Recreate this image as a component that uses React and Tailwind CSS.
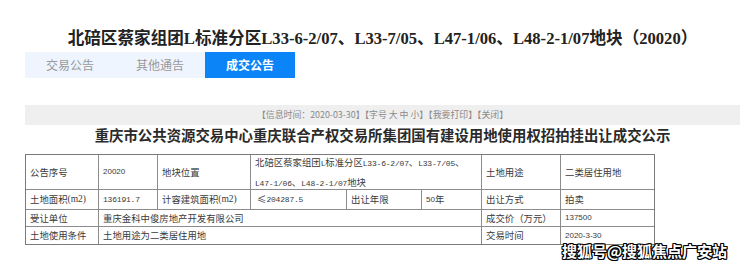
import React from "react";

function M({ children }) {
  return <span className="font-['Liberation_Mono',monospace] text-[8px] tracking-[-0.2px]">{children}</span>;
}
function S({ children }) {
  return <span className="font-['Liberation_Sans',sans-serif] text-[8px]">{children}</span>;
}

function Cell({ children, className = "" }) {
  return (
    <div className={"bg-white flex items-center pl-[4px] whitespace-nowrap overflow-hidden " + className}>
      {children}
    </div>
  );
}

export default function App() {
  return (
    <div className="w-[740px] h-[269px] bg-white relative overflow-hidden font-['Noto_Sans_CJK_SC',sans-serif]">
      <div className="pl-[25px] flex flex-col">
        <div className="mt-[29px] h-[20px] flex items-center justify-center text-[16.6px] leading-[20px] font-bold text-[#222] font-['Liberation_Serif','Noto_Sans_CJK_SC',serif] whitespace-nowrap">
          北碚区蔡家组团L标准分区L33-6-2/07、L33-7/05、L47-1/06、L48-2-1/07地块（20020）
        </div>
        <div className="mt-[3px] w-[270px] h-[26px] flex bg-[#eef5fe] text-[12px]">
          <div className="w-[90px] flex items-center justify-center text-[#9a9a9a]">交易公告</div>
          <div className="w-[90px] flex items-center justify-center text-[#9a9a9a]">其他通告</div>
          <div className="w-[90px] flex items-center justify-center bg-[#0b84f7] text-white font-bold">成交公告</div>
        </div>
        <div className="mt-[27px] h-[20px] bg-[#efefef] flex items-center justify-center text-[8.9px] text-[#8a8a8a] whitespace-nowrap">
          【信息时间：2020-03-30】【字号 大 中 小】【我要打印】【关闭】
        </div>
        <div className="h-[20px] flex items-center justify-center text-[14.4px] font-bold text-[#2a2a2a] whitespace-nowrap">
          重庆市公共资源交易中心重庆联合产权交易所集团国有建设用地使用权招拍挂出让成交公示
        </div>
        <div className="mt-[9px] w-fit grid grid-cols-[72px_58px_92px_95px_74px_59px_78px_93px] grid-rows-[34px_19px_16px_17px] gap-px bg-[#8c8c8c] border border-[#7a7a7a] text-[9.4px] text-[#3a3a3a]">
          <Cell>公告序号</Cell>
          <Cell><S>20020</S></Cell>
          <Cell>地块位置</Cell>
          <Cell className="col-span-3 leading-[18px] pt-[1px]">
            <div>
              <div>北碚区蔡家组团<M>L</M>标准分区<M>L33-6-2/07</M>、<M>L33-7/05</M>、</div>
              <div><M>L47-1/06</M>、<M>L48-2-1/07</M>地块</div>
            </div>
          </Cell>
          <Cell>土地用途</Cell>
          <Cell>二类居住用地</Cell>

          <Cell>土地面积<span className="font-['Liberation_Serif',serif] text-[9.5px]">(m2)</span></Cell>
          <Cell><M>136191.7</M></Cell>
          <Cell>计容建筑面积<span className="font-['Liberation_Serif',serif] text-[9.5px]">(m2)</span></Cell>
          <Cell className="pl-[6px]">≤<M>204287.5</M></Cell>
          <Cell>出让年限</Cell>
          <Cell><S>50</S>年</Cell>
          <Cell>出让方式</Cell>
          <Cell>拍卖</Cell>

          <Cell>受让单位</Cell>
          <Cell className="col-span-5">重庆金科中俊房地产开发有限公司</Cell>
          <Cell>成交价（万元）</Cell>
          <Cell><S>137500</S></Cell>

          <Cell>土地使用条件</Cell>
          <Cell className="col-span-5">土地用途为二类居住用地</Cell>
          <Cell>交易时间</Cell>
          <Cell><S>2020-3-30</S></Cell>
        </div>
      </div>
      <div className="absolute left-[562px] top-[240px] text-[15px] font-bold text-white whitespace-nowrap [text-shadow:1px_0_0_#000,-1px_0_0_#000,0_1px_0_#000,0_-1px_0_#000,1px_1px_0_#000,-1px_-1px_0_#000,1px_-1px_0_#000,-1px_1px_0_#000]">
        搜狐号@搜狐焦点广安站
      </div>
    </div>
  );
}
